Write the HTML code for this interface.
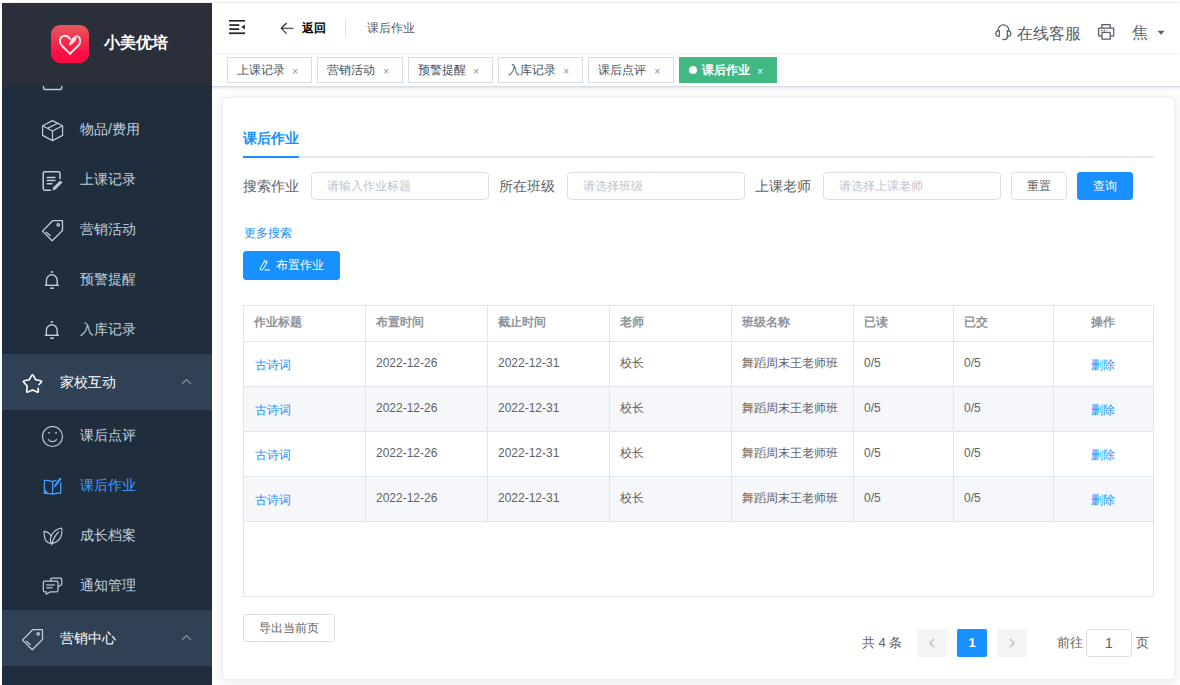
<!DOCTYPE html>
<html><head><meta charset="utf-8">
<style>
*{box-sizing:border-box;margin:0;padding:0}
html,body{width:1180px;height:685px;overflow:hidden;background:#fff;font-family:"Liberation Sans",sans-serif;color:#606266}
.abs{position:absolute}
.topline{position:absolute;left:0;top:2px;width:1180px;height:1px;background:#efefef}
#side{position:absolute;left:2px;top:3px;width:210px;height:682px;background:#1f2d3d;overflow:hidden}
#logo{position:absolute;left:0;top:0;width:210px;height:83px;background:#2b2f3a;z-index:2}
.mi{position:absolute;left:0;width:210px;height:50px;color:#c4cfdc;font-size:14px;font-weight:500}
.mi .t{position:absolute;left:78px;top:0;line-height:51px;white-space:nowrap}
.mi svg{position:absolute}
.sub{position:absolute;left:0;width:210px;height:56px;background:#304156;color:#fff;font-size:14px;font-weight:500}
.sub .t{position:absolute;left:57.5px;top:0;line-height:57px}
.sub svg{position:absolute}
.arr{position:absolute;left:179px;top:24px}
#nav{position:absolute;left:212px;top:3px;width:968px;height:50px;background:#fff;z-index:3;box-shadow:0 1px 3px rgba(0,21,41,.07)}
#tags{position:absolute;left:212px;top:53px;width:968px;height:34px;background:#fff;border-bottom:1px solid #d8dce5;box-shadow:0 1px 3px 0 rgba(0,0,0,.12),0 0 3px 0 rgba(0,0,0,.04)}
.tag{position:absolute;top:4px;height:26px;line-height:24px;border:1px solid #d8dce5;color:#495060;background:#fff;font-size:12px;padding-left:9px;white-space:nowrap}
.tag .x{position:absolute;right:13px;top:2px;font-size:10px;color:#8a8f99}
.tag.act{background:#42b983;border-color:#42b983;color:#fff}
.tag.act .x{color:#fff}
#card{position:absolute;left:222px;top:97px;width:953px;height:583px;border:1px solid #ebeef5;border-radius:4px;background:#fff;box-shadow:0 2px 12px 0 rgba(0,0,0,.1)}
.lbl{position:absolute;font-size:14px;color:#606266;line-height:28px;white-space:nowrap}
.inp{position:absolute;height:28px;border:1px solid #dcdfe6;border-radius:4px;background:#fff;font-size:12px;color:#c0c4cc;line-height:26px;padding-left:15px;white-space:nowrap}
.btn{position:absolute;height:28px;border:1px solid #dcdfe6;border-radius:3px;background:#fff;font-size:12px;color:#606266;line-height:26px;text-align:center;white-space:nowrap}
.btn.pri{background:#1890ff;border-color:#1890ff;color:#fff}
table{position:absolute;left:243px;top:305px;border-collapse:collapse;font-size:12px;table-layout:fixed}
td,th{border:1px solid #e4e7ed;padding:0 10px;text-align:left;white-space:nowrap}
th{height:36px;color:#909399;font-weight:bold}
td{height:45px;color:#606266}
tr.s td{background:#f5f7fa}
.lk{color:#1890ff}
.pg{position:absolute;top:629px;height:28px;width:30px;background:#f4f4f5;border-radius:2px;color:#c0c4cc;text-align:center;line-height:28px;font-size:13px}
</style></head><body>
<div class="topline"></div>

<!-- SIDEBAR -->
<div id="side">
  <div id="logo">
    <div class="abs" style="left:48.5px;top:22px;width:38px;height:38px;border-radius:9px;background:linear-gradient(180deg,#e8565c 0%,#f3334f 40%,#fd0d45 75%,#ff0944 100%)">
      <svg width="38" height="38" viewBox="0 0 38 38" style="position:absolute;left:0;top:0"><g transform="translate(0 0.9) scale(0.95)">
        <path d="M20 29.3 L11.3 20.6 C8.3 17.6 8.7 12.4 12.6 10.8 C15.6 9.6 18.3 11 20 13.4" fill="none" stroke="#fff" stroke-width="2" stroke-linecap="round" stroke-linejoin="round" opacity=".9"/>
        <path d="M20 29.3 L28.8 20.6 C31.3 18.1 31.6 13.6 28.6 11" fill="none" stroke="#fff" stroke-width="2" stroke-linecap="round" opacity=".9"/>
        <path d="M19.2 20.8 C19.2 15.8 22.2 12.1 27 9.2 C27.8 13.8 25 18.2 19.2 20.8 Z" fill="#fff" opacity=".85"/></g>
      </svg>
    </div>
    <div class="abs" style="left:102px;top:29px;font-size:16px;font-weight:bold;color:#fff;line-height:22px;white-space:nowrap">小美优培</div>
  </div>

  <div class="mi" style="top:51px">
    <svg width="22" height="22" viewBox="0 0 22 22" style="left:40px;top:16px"><rect x="1.5" y="0.5" width="18.2" height="19" rx="1.5" fill="none" stroke="#bfcbd9" stroke-width="1.4"/></svg>
  </div>
  <div class="mi" style="top:101px">
    <svg width="22" height="22" viewBox="0 0 22 22" style="left:40px;top:16px"><g fill="none" stroke="#bfcbd9" stroke-width="1.2" stroke-linejoin="round"><path d="M10.5 0.6 L20.6 5.8 V15.4 L10.5 20.6 L0.6 15.4 V5.8 Z"/><path d="M0.6 5.8 L10.5 11 L20.6 5.8 M10.5 11 V20.6 M5.5 8.4 L15.6 3.2"/></g></svg>
    <span class="t">物品/费用</span>
  </div>
  <div class="mi" style="top:151px">
    <svg width="22" height="22" viewBox="0 0 22 22" style="left:40px;top:17px"><g fill="none" stroke="#bfcbd9" stroke-width="1.5" stroke-linecap="round" stroke-linejoin="round"><path d="M8.5 19.2 H2.8 Q1.2 19.2 1.2 17.6 V2.4 Q1.2 0.8 2.8 0.8 H16.4 Q18 0.8 18 2.4 V7.5"/><path d="M5.3 6.5 H13 M5.3 9.6 H13 M5.3 12.7 H10"/></g><path d="M10.5 19.5 L11.3 16.3 L18.2 9.4 L20.4 11.6 L13.5 18.5 Z" fill="#bfcbd9"/></svg>
    <span class="t">上课记录</span>
  </div>
  <div class="mi" style="top:201px">
    <svg width="22" height="22" viewBox="0 0 22 22" style="left:40px;top:16px"><g fill="none" stroke="#bfcbd9" stroke-width="1.3" stroke-linejoin="round"><path d="M10.6 0.7 H20.5 V10.5 L10.2 20.8 L0.5 11.1 Z"/><circle cx="16.2" cy="4.8" r="1.2"/><path d="M4.2 12.2 L8.2 15.6" stroke-linecap="round"/></g></svg>
    <span class="t">营销活动</span>
  </div>
  <div class="mi" style="top:251px">
    <svg width="16" height="20" viewBox="0 0 16 20" style="left:42px;top:16px"><g fill="none" stroke="#bfcbd9" stroke-width="1.4"><path d="M2.4 15 V10.2 A5.4 5.4 0 0 1 13.2 10.2 V15"/><path d="M0.8 15.3 H15"/></g><rect x="6.7" y="1.2" width="2.4" height="1.6" fill="#bfcbd9"/><rect x="6.2" y="17.4" width="3.6" height="1.6" fill="#bfcbd9"/></svg>
    <span class="t">预警提醒</span>
  </div>
  <div class="mi" style="top:301px">
    <svg width="16" height="20" viewBox="0 0 16 20" style="left:42px;top:16px"><g fill="none" stroke="#bfcbd9" stroke-width="1.4"><path d="M2.4 15 V10.2 A5.4 5.4 0 0 1 13.2 10.2 V15"/><path d="M0.8 15.3 H15"/></g><rect x="6.7" y="1.2" width="2.4" height="1.6" fill="#bfcbd9"/><rect x="6.2" y="17.4" width="3.6" height="1.6" fill="#bfcbd9"/></svg>
    <span class="t">入库记录</span>
  </div>

  <div class="sub" style="top:351px">
    <svg width="22" height="22" viewBox="0 0 22 22" style="left:20px;top:19px"><path d="M16.06 15.31 L16.35 18.12 Q16.50 19.55 15.18 18.97 L10.50 16.90 L5.82 18.97 Q4.50 19.55 4.65 18.12 L5.17 13.03 L1.76 9.22 Q0.80 8.15 2.21 7.84 L7.21 6.77 L9.78 2.35 Q10.50 1.10 11.22 2.35 L13.79 6.77 L18.79 7.84 Q20.20 8.15 19.24 9.22 L17.14 11.57" fill="none" stroke="#fff" stroke-width="1.6" stroke-linecap="round" stroke-linejoin="round"/></svg>
    <span class="t">家校互动</span>
    <svg class="arr" width="12" height="8" viewBox="0 0 12 8"><path d="M1 5.8 L5.5 1.5 L10 5.8" fill="none" stroke="#909399" stroke-width="1.1"/></svg>
  </div>

  <div class="mi" style="top:407px">
    <svg width="22" height="22" viewBox="0 0 22 22" style="left:40px;top:16px"><g fill="none" stroke="#bfcbd9" stroke-width="1.2"><circle cx="10.5" cy="10.5" r="10"/><path d="M6.4 13.6 Q10.5 17.8 14.6 13.6" stroke-linecap="round"/></g><circle cx="7" cy="6.8" r="0.9" fill="#bfcbd9"/><circle cx="14" cy="6.8" r="0.9" fill="#bfcbd9"/></svg>
    <span class="t">课后点评</span>
  </div>
  <div class="mi" style="top:457px;color:#409eff">
    <svg width="26" height="24" viewBox="0 0 26 24" style="left:38px;top:14px"><g fill="none" stroke="#409eff" stroke-width="1.3" stroke-linejoin="round"><path d="M12.6 20 Q8.5 19.2 4.4 19.4 V6.4 Q9 6.2 12.6 7.6 Q14.5 6.8 16.4 6.4"/><path d="M12.6 7.6 V20.2 Q16.5 19 20.7 19 V8.6"/></g><path d="M4.4 14.6 V19.6 L8.6 19.6 Z" fill="#409eff"/><path d="M13.6 13.9 L14.6 10.8 L19.4 4.3 Q20.1 3.5 20.9 4.1 Q21.6 4.7 21.1 5.6 L16.3 12.1 Z" fill="#409eff"/></svg>
    <span class="t">课后作业</span>
  </div>
  <div class="mi" style="top:507px">
    <svg width="22" height="22" viewBox="0 0 22 22" style="left:40px;top:17px"><g fill="none" stroke="#bfcbd9" stroke-width="1.25" stroke-linejoin="round" stroke-linecap="round" transform="translate(1.6 0.3) scale(0.91)"><path d="M7.8 17.6 C2.8 17.5 0.5 14 0.4 4.5 C3.8 4.8 6.8 6.5 8.2 9.2"/><path d="M8.2 18 C5.5 10 11 2.5 19.8 0.8 C21.2 9 17.8 16.5 8.2 18 Z"/><path d="M8.8 19.2 C10 13.5 12.5 9 16.5 5.2"/></g></svg>
    <span class="t">成长档案</span>
  </div>
  <div class="mi" style="top:557px">
    <svg width="22" height="22" viewBox="0 0 22 22" style="left:40px;top:17px"><g fill="none" stroke="#bfcbd9" stroke-width="1.2" stroke-linejoin="round"><path d="M8.7 4.2 V2.3 Q8.7 1.1 9.9 1.1 H18.5 Q19.7 1.1 19.7 2.3 V7.8 L16 9.6"/><path d="M2.5 4.2 H14.8 Q16 4.2 16 5.4 V13.6 Q16 14.8 14.8 14.8 H8.5 L4.2 17.3 V14.8 H2.5 Q1.3 14.8 1.3 13.6 V5.4 Q1.3 4.2 2.5 4.2 Z"/></g><path d="M4.2 8.1 H12.8 M4.2 10.7 H10.5" stroke="#bfcbd9" stroke-width="1.5" opacity=".8"/></svg>
    <span class="t">通知管理</span>
  </div>

  <div class="sub" style="top:607px">
    <svg width="22" height="22" viewBox="0 0 22 22" style="left:20px;top:19px"><g fill="none" stroke="#bfcbd9" stroke-width="1.3" stroke-linejoin="round"><path d="M10.6 0.7 H20.5 V10.5 L10.2 20.8 L0.5 11.1 Z"/><circle cx="16.2" cy="4.8" r="1.2"/><path d="M4.2 12.2 L8.2 15.6" stroke-linecap="round"/></g></svg>
    <span class="t">营销中心</span>
    <svg class="arr" width="12" height="8" viewBox="0 0 12 8"><path d="M1 5.8 L5.5 1.5 L10 5.8" fill="none" stroke="#909399" stroke-width="1.1"/></svg>
  </div>
</div>

<!-- NAVBAR -->
<div id="nav">
  <svg width="17" height="15" viewBox="0 0 17 15" style="position:absolute;left:17px;top:17px"><g fill="#222"><rect x="0" y="0" width="16" height="1.6"/><rect x="0.3" y="4.2" width="10" height="1.7"/><rect x="0.3" y="8.3" width="10" height="1.7"/><rect x="0" y="12.4" width="16" height="1.7"/><path d="M15.8 4.5 V9.6 L12.4 7.05 Z"/></g></svg>
  <svg width="16" height="14" viewBox="0 0 16 14" style="position:absolute;left:67px;top:18px"><path d="M14.6 7.3 H2.3 M7.6 2 L2.3 7.3 L7.6 12.6" fill="none" stroke="#222" stroke-width="1.1"/></svg>
  <div class="abs" style="left:90px;top:17px;font-size:12px;font-weight:bold;color:#000;line-height:16px">返回</div>
  <div class="abs" style="left:133px;top:17px;width:1px;height:16px;background:#dcdfe6"></div>
  <div class="abs" style="left:155px;top:17px;font-size:12px;color:#5a5e66;line-height:16px">课后作业</div>

  <svg width="26" height="24" viewBox="0 0 26 24" style="position:absolute;left:778px;top:17px"><g fill="none" stroke="#5a5e66" stroke-width="1.25" stroke-linecap="round" stroke-linejoin="round"><path d="M8 10.8 V10.2 A5.4 5.4 0 0 1 18.8 10.2 V10.8"/><path d="M9.3 10.6 V16.4 Q5.8 16.4 5.8 13.5 Q5.8 10.6 9.3 10.6 Z"/><path d="M17.3 10.6 V16.4 Q20.8 16.4 20.8 13.5 Q20.8 10.6 17.3 10.6 Z"/><path d="M17.6 16.6 Q17.2 19.4 14.6 19.5 H12.6"/></g></svg>
  <div class="abs" style="left:805px;top:21px;font-size:16px;color:#5a5e66;line-height:20px;white-space:nowrap">在线客服</div>
  <svg width="26" height="24" viewBox="0 0 26 24" style="position:absolute;left:882px;top:17px"><g fill="none" stroke="#5a5e66" stroke-width="1.3" stroke-linejoin="round"><path d="M8 8.1 V4.6 H16.2 V8.1"/><path d="M8 16.2 H5.4 Q4.6 16.2 4.6 15.4 V9 Q4.6 8.2 5.4 8.2 H18.9 Q19.7 8.2 19.7 9 V15.4 Q19.7 16.2 18.9 16.2 H16.2"/><path d="M8 12.4 H16.2 V19.2 H8 Z"/></g><rect x="7" y="10" width="1.4" height="1.2" fill="#5a5e66"/><rect x="9.8" y="10" width="1.4" height="1.2" fill="#5a5e66"/></svg>
  <div class="abs" style="left:920px;top:20px;font-size:16px;color:#5a5e66;line-height:20px">焦</div>
  <svg width="8" height="6" viewBox="0 0 8 6" style="position:absolute;left:945px;top:26.5px"><path d="M0.5 0.8 H7.5 L4 4.8 Z" fill="#5a5e66"/></svg>
</div>
<div id="tags">
  <div class="tag" style="left:15px;width:85px">上课记录<span class="x">×</span></div>
  <div class="tag" style="left:105px;width:86px">营销活动<span class="x">×</span></div>
  <div class="tag" style="left:196px;width:85px">预警提醒<span class="x">×</span></div>
  <div class="tag" style="left:286px;width:85px">入库记录<span class="x">×</span></div>
  <div class="tag" style="left:376px;width:86px">课后点评<span class="x">×</span></div>
  <div class="tag act" style="left:467px;width:98px;font-weight:bold"><span style="display:inline-block;width:8px;height:8px;border-radius:50%;background:#fff;margin-right:5px;vertical-align:0px"></span>课后作业<span class="x" style="right:13px;font-weight:normal">×</span></div>
</div>

<!-- CARD -->
<div id="card">
<div class="abs" style="left:20px;top:20px;height:40px;line-height:40px;font-size:14px;font-weight:bold;color:#1890ff">课后作业</div>
<div class="abs" style="left:20px;top:58px;width:911px;height:2px;background:#e4e7ed"></div>
<div class="abs" style="left:20px;top:58px;width:56px;height:2px;background:#1890ff"></div>
<div class="lbl" style="left:20px;top:74px">搜索作业</div>
<div class="lbl" style="left:276px;top:74px">所在班级</div>
<div class="lbl" style="left:532px;top:74px">上课老师</div>
<div class="inp" style="left:88px;top:74px;width:178px">请输入作业标题</div>
<div class="inp" style="left:344px;top:74px;width:178px">请选择班级</div>
<div class="inp" style="left:600px;top:74px;width:178px">请选择上课老师</div>
<div class="btn" style="left:788px;top:74px;width:56px">重置</div>
<div class="btn pri" style="left:854px;top:74px;width:56px">查询</div>
<div class="abs" style="left:21px;top:127px;font-size:12px;line-height:16px;color:#1890ff">更多搜索</div>
<div class="btn pri" style="left:20px;top:153px;width:97px;height:29px;line-height:27px"><svg width="12" height="12" viewBox="0 0 12 12" style="position:absolute;left:15px;top:7px"><g fill="none" stroke="#fff" stroke-width="1" stroke-linejoin="round"><path d="M1.5 9.2 L5.9 1.2 L8.4 2.6 L4 10.6 L1.3 10.9 Z"/><path d="M5.1 2.7 L7.6 4.1"/></g><path d="M5.6 11 H11" stroke="#fff" stroke-width="1.1"/></svg><span style="position:absolute;left:32px;top:0">布置作业</span></div>
<div class="abs" style="left:21px;top:289px;width:909px;height:44px;background:#f5f7fa"></div>
<div class="abs" style="left:21px;top:379px;width:909px;height:44px;background:#f5f7fa"></div>
<div class="abs" style="left:20px;top:207px;width:911px;height:1px;background:#dfe6ec"></div>
<div class="abs" style="left:20px;top:243px;width:911px;height:1px;background:#dfe6ec"></div>
<div class="abs" style="left:20px;top:288px;width:911px;height:1px;background:#dfe6ec"></div>
<div class="abs" style="left:20px;top:333px;width:911px;height:1px;background:#dfe6ec"></div>
<div class="abs" style="left:20px;top:378px;width:911px;height:1px;background:#dfe6ec"></div>
<div class="abs" style="left:20px;top:423px;width:911px;height:1px;background:#dfe6ec"></div>
<div class="abs" style="left:20px;top:498px;width:911px;height:1px;background:#dfe6ec"></div>
<div class="abs" style="left:20px;top:207px;width:1px;height:292px;background:#dfe6ec"></div>
<div class="abs" style="left:142px;top:207px;width:1px;height:216px;background:#dfe6ec"></div>
<div class="abs" style="left:264px;top:207px;width:1px;height:216px;background:#dfe6ec"></div>
<div class="abs" style="left:386px;top:207px;width:1px;height:216px;background:#dfe6ec"></div>
<div class="abs" style="left:508px;top:207px;width:1px;height:216px;background:#dfe6ec"></div>
<div class="abs" style="left:630px;top:207px;width:1px;height:216px;background:#dfe6ec"></div>
<div class="abs" style="left:730px;top:207px;width:1px;height:216px;background:#dfe6ec"></div>
<div class="abs" style="left:830px;top:207px;width:1px;height:216px;background:#dfe6ec"></div>
<div class="abs" style="left:930px;top:207px;width:1px;height:292px;background:#dfe6ec"></div>
<div class="abs" style="left:31px;top:216px;font-size:12px;font-weight:bold;color:#909399;line-height:16px">作业标题</div>
<div class="abs" style="left:153px;top:216px;font-size:12px;font-weight:bold;color:#909399;line-height:16px">布置时间</div>
<div class="abs" style="left:275px;top:216px;font-size:12px;font-weight:bold;color:#909399;line-height:16px">截止时间</div>
<div class="abs" style="left:397px;top:216px;font-size:12px;font-weight:bold;color:#909399;line-height:16px">老师</div>
<div class="abs" style="left:519px;top:216px;font-size:12px;font-weight:bold;color:#909399;line-height:16px">班级名称</div>
<div class="abs" style="left:641px;top:216px;font-size:12px;font-weight:bold;color:#909399;line-height:16px">已读</div>
<div class="abs" style="left:741px;top:216px;font-size:12px;font-weight:bold;color:#909399;line-height:16px">已交</div>
<div class="abs" style="left:830px;top:216px;width:100px;text-align:center;font-size:12px;font-weight:bold;color:#909399;line-height:16px">操作</div>
<div class="abs" style="left:32px;top:259px;font-size:12px;color:#1890ff;line-height:16px">古诗词</div>
<div class="abs" style="left:153px;top:257px;font-size:12px;color:#606266;line-height:16px;white-space:nowrap">2022-12-26</div>
<div class="abs" style="left:275px;top:257px;font-size:12px;color:#606266;line-height:16px;white-space:nowrap">2022-12-31</div>
<div class="abs" style="left:397px;top:257px;font-size:12px;color:#606266;line-height:16px;white-space:nowrap">校长</div>
<div class="abs" style="left:519px;top:257px;font-size:12px;color:#606266;line-height:16px;white-space:nowrap">舞蹈周末王老师班</div>
<div class="abs" style="left:641px;top:257px;font-size:12px;color:#606266;line-height:16px;white-space:nowrap">0/5</div>
<div class="abs" style="left:741px;top:257px;font-size:12px;color:#606266;line-height:16px;white-space:nowrap">0/5</div>
<div class="abs" style="left:830px;top:259px;width:100px;text-align:center;font-size:12px;color:#1890ff;line-height:16px">删除</div>
<div class="abs" style="left:32px;top:304px;font-size:12px;color:#1890ff;line-height:16px">古诗词</div>
<div class="abs" style="left:153px;top:302px;font-size:12px;color:#606266;line-height:16px;white-space:nowrap">2022-12-26</div>
<div class="abs" style="left:275px;top:302px;font-size:12px;color:#606266;line-height:16px;white-space:nowrap">2022-12-31</div>
<div class="abs" style="left:397px;top:302px;font-size:12px;color:#606266;line-height:16px;white-space:nowrap">校长</div>
<div class="abs" style="left:519px;top:302px;font-size:12px;color:#606266;line-height:16px;white-space:nowrap">舞蹈周末王老师班</div>
<div class="abs" style="left:641px;top:302px;font-size:12px;color:#606266;line-height:16px;white-space:nowrap">0/5</div>
<div class="abs" style="left:741px;top:302px;font-size:12px;color:#606266;line-height:16px;white-space:nowrap">0/5</div>
<div class="abs" style="left:830px;top:304px;width:100px;text-align:center;font-size:12px;color:#1890ff;line-height:16px">删除</div>
<div class="abs" style="left:32px;top:349px;font-size:12px;color:#1890ff;line-height:16px">古诗词</div>
<div class="abs" style="left:153px;top:347px;font-size:12px;color:#606266;line-height:16px;white-space:nowrap">2022-12-26</div>
<div class="abs" style="left:275px;top:347px;font-size:12px;color:#606266;line-height:16px;white-space:nowrap">2022-12-31</div>
<div class="abs" style="left:397px;top:347px;font-size:12px;color:#606266;line-height:16px;white-space:nowrap">校长</div>
<div class="abs" style="left:519px;top:347px;font-size:12px;color:#606266;line-height:16px;white-space:nowrap">舞蹈周末王老师班</div>
<div class="abs" style="left:641px;top:347px;font-size:12px;color:#606266;line-height:16px;white-space:nowrap">0/5</div>
<div class="abs" style="left:741px;top:347px;font-size:12px;color:#606266;line-height:16px;white-space:nowrap">0/5</div>
<div class="abs" style="left:830px;top:349px;width:100px;text-align:center;font-size:12px;color:#1890ff;line-height:16px">删除</div>
<div class="abs" style="left:32px;top:394px;font-size:12px;color:#1890ff;line-height:16px">古诗词</div>
<div class="abs" style="left:153px;top:392px;font-size:12px;color:#606266;line-height:16px;white-space:nowrap">2022-12-26</div>
<div class="abs" style="left:275px;top:392px;font-size:12px;color:#606266;line-height:16px;white-space:nowrap">2022-12-31</div>
<div class="abs" style="left:397px;top:392px;font-size:12px;color:#606266;line-height:16px;white-space:nowrap">校长</div>
<div class="abs" style="left:519px;top:392px;font-size:12px;color:#606266;line-height:16px;white-space:nowrap">舞蹈周末王老师班</div>
<div class="abs" style="left:641px;top:392px;font-size:12px;color:#606266;line-height:16px;white-space:nowrap">0/5</div>
<div class="abs" style="left:741px;top:392px;font-size:12px;color:#606266;line-height:16px;white-space:nowrap">0/5</div>
<div class="abs" style="left:830px;top:394px;width:100px;text-align:center;font-size:12px;color:#1890ff;line-height:16px">删除</div>
<div class="btn" style="left:20px;top:516px;width:92px">导出当前页</div>
<div class="abs" style="left:639px;top:537px;font-size:13px;color:#606266;line-height:16px;white-space:nowrap">共 4 条</div>
<div class="pg" style="left:694px;top:531px"><svg width="8" height="10" viewBox="0 0 8 10" style="margin-top:9px"><path d="M6 1 L2 5 L6 9" fill="none" stroke="#c0c4cc" stroke-width="1.7"/></svg></div>
<div class="pg" style="left:734px;top:531px;background:#1890ff;color:#fff;font-weight:bold">1</div>
<div class="pg" style="left:774px;top:531px"><svg width="8" height="10" viewBox="0 0 8 10" style="margin-top:9px"><path d="M2 1 L6 5 L2 9" fill="none" stroke="#c0c4cc" stroke-width="1.7"/></svg></div>
<div class="abs" style="left:834px;top:537px;font-size:13px;color:#606266;line-height:16px">前往</div>
<div class="inp" style="left:863px;top:531px;width:46px;padding:0;text-align:center;color:#606266;font-size:14px;border-radius:3px">1</div>
<div class="abs" style="left:913px;top:537px;font-size:13px;color:#606266;line-height:16px">页</div>
</div>

</body></html>
